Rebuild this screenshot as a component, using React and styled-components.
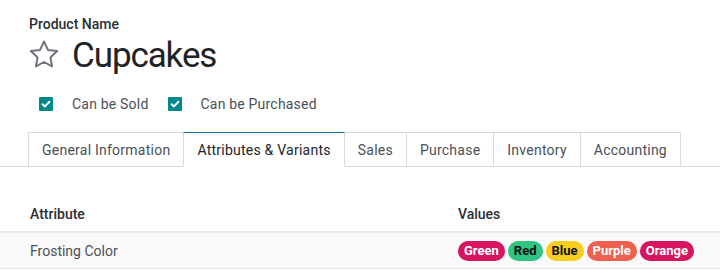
import React from "react";
import styled, { createGlobalStyle } from "styled-components";

const tabs = [
  "General Information",
  "Attributes & Variants",
  "Sales",
  "Purchase",
  "Inventory",
  "Accounting"
];

const values = [
  { label: "Green", color: "#d6145f", text: "#ffffff" },
  { label: "Red", color: "#30c381", text: "#111111" },
  { label: "Blue", color: "#f7cd1f", text: "#111111" },
  { label: "Purple", color: "#f06050", text: "#ffffff" },
  { label: "Orange", color: "#d6145f", text: "#ffffff" }
];

const StarIcon = () => (
  <svg width="30" height="28" viewBox="0 0 30 28">
    <polygon
      points="15,1.6 19,9.9 28.2,11.1 21.4,17.4 23.1,26.5 15,22 6.9,26.5 8.6,17.4 1.8,11.1 11,9.9"
      fill="none"
      stroke="#6c737b"
      strokeWidth="2"
      strokeLinejoin="round"
    />
  </svg>
);

const Check = () => (
  <svg width="14" height="14" viewBox="0 0 14 14">
    <path
      d="M3.6 7.2 L6 9.4 L10.4 4.8"
      fill="none"
      stroke="#ffffff"
      strokeWidth="2"
      strokeLinecap="round"
      strokeLinejoin="round"
    />
  </svg>
);

export default function App() {
  return (
    <Sheet>
      <GlobalStyle />
      <Header>
        <Label>Product Name</Label>
        <NameRow>
          <StarBox>
            <StarIcon />
          </StarBox>
          <Name>Cupcakes</Name>
        </NameRow>
        <Options>
          <Option>
            <Box>
              <Check />
            </Box>
            <OptionText>Can be Sold</OptionText>
          </Option>
          <Option>
            <Box>
              <Check />
            </Box>
            <OptionText>Can be Purchased</OptionText>
          </Option>
        </Options>
      </Header>

      <TabList>
        {tabs.map(t => (
          <Tab key={t} active={t === "Attributes & Variants"}>
            {t}
          </Tab>
        ))}
      </TabList>

      <Table>
        <HeadRow>
          <AttrCell>Attribute</AttrCell>
          <ValueCell>Values</ValueCell>
        </HeadRow>
        <BodyRow>
          <AttrCell>Frosting Color</AttrCell>
          <ValueCell>
            <Badges>
              {values.map(v => (
                <Badge key={v.label} bg={v.color} fg={v.text}>
                  {v.label}
                </Badge>
              ))}
            </Badges>
          </ValueCell>
        </BodyRow>
      </Table>
    </Sheet>
  );
}

// CSS
const GlobalStyle = createGlobalStyle`
  body {
    margin: 0;
    background: #ffffff;
    font-family: Roboto, "Liberation Sans", sans-serif;
    color: #212529;
  }
`;
const Sheet = styled.div`
  width: 720px;
  height: 270px;
  overflow: hidden;
  background: #ffffff;
`;
const Header = styled.div`
  padding: 14px 0 0 29px;
`;
const Label = styled.div`
  font-size: 14px;
  line-height: 20px;
  font-weight: 500;
  color: #2a2e33;
`;
const NameRow = styled.div`
  display: flex;
  align-items: flex-start;
  height: 44px;
`;
const StarBox = styled.div`
  width: 30px;
  height: 28px;
  margin-top: 6px;
  margin-right: 13px;
`;
const Name = styled.div`
  font-size: 35px;
  line-height: 44px;
  letter-spacing: -1.1px;
  color: #1f2326;
`;
const Options = styled.div`
  display: flex;
  align-items: center;
  gap: 19px;
  margin-top: 16px;
  padding-left: 10px;
  height: 20px;
`;
const Option = styled.div`
  display: flex;
  align-items: center;
  gap: 19px;
`;
const Box = styled.div`
  width: 14px;
  height: 14px;
  background: #01898a;
  border-radius: 1px;
  display: flex;
`;
const OptionText = styled.span`
  font-size: 14px;
  line-height: 20px;
  letter-spacing: 0.2px;
  color: #4a5057;
`;
const TabList = styled.div`
  display: flex;
  margin-top: 18px;
  padding-left: 28px;
  border-bottom: 1px solid #d8dadd;
`;
const Tab = styled.div`
  position: relative;
  z-index: ${props => (props.active ? 1 : 0)};
  padding: 0 13px;
  margin-right: -1px;
  margin-bottom: ${props => (props.active ? "-1px" : "0")};
  display: flex;
  align-items: center;
  font-size: 14px;
  letter-spacing: 0.24px;
  color: ${props => (props.active ? "#212529" : "#495057")};
  background: #ffffff;
  border: 1px solid #d8dadd;
  border-top-color: ${props => (props.active ? "#0a71ad" : "#d8dadd")};
  border-bottom: ${props => (props.active ? "1px solid #ffffff" : "none")};
  box-sizing: border-box;
  height: ${props => (props.active ? "35px" : "34px")};
`;
const Table = styled.div`
  margin-top: 30px;
`;
const HeadRow = styled.div`
  display: grid;
  grid-template-columns: 458px 1fr;
  height: 36px;
  align-items: center;
  border-bottom: 2px solid #e8e9eb;
  box-sizing: border-box;
  font-weight: 500;
  color: #2a2e33;
`;
const BodyRow = styled(HeadRow)`
  font-weight: 400;
  color: #4b5157;
  background: #f9f9fa;
  border-bottom: 1px solid #dfe1e4;
`;
const AttrCell = styled.div`
  padding-left: 30px;
  font-size: 14px;
  line-height: 20px;
`;
const ValueCell = styled.div`
  font-size: 14px;
  line-height: 20px;
`;
const Badges = styled.div`
  display: flex;
  gap: 3px;
`;
const Badge = styled.span`
  height: 20px;
  padding: 0 6px;
  border-radius: 10px;
  font-size: 13px;
  font-weight: 700;
  line-height: 20px;
  background: ${props => props.bg};
  color: ${props => props.fg};
`;
